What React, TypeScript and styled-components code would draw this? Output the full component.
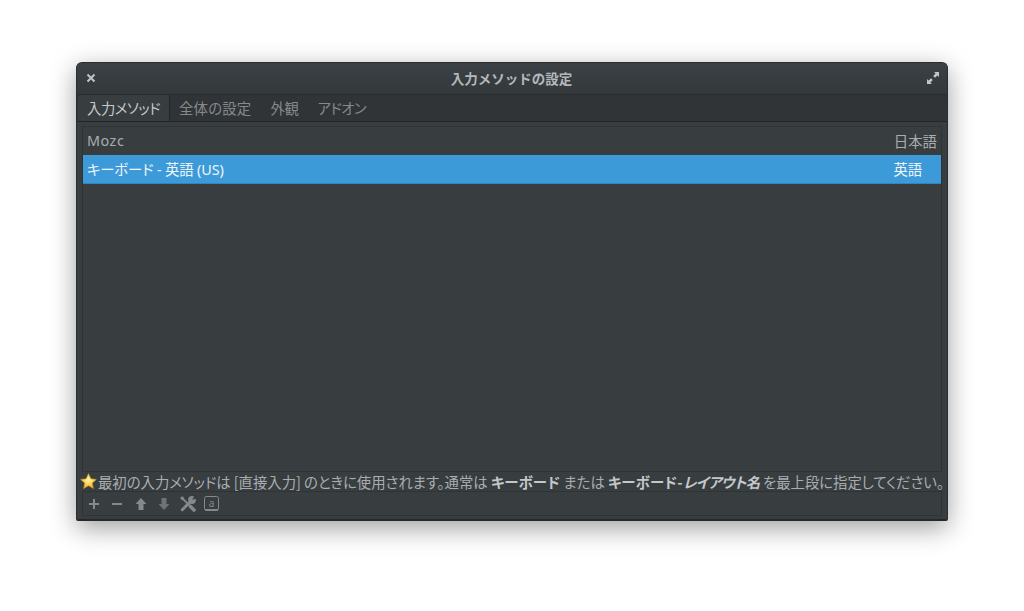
import React from "react";
import styled, { createGlobalStyle } from "styled-components";

const Global = createGlobalStyle`
  html, body { margin: 0; padding: 0; background: #fff; }
  body { font-family: "Noto Sans", "Noto Sans CJK JP", sans-serif; font-size: 14px; }
`;

const Page = styled.div`
  width: 1024px;
  height: 611px;
  padding: 62px 76px 90px;
  box-sizing: border-box;
  overflow: hidden;
`;

const Window = styled.div`
  height: 459px;
  display: flex;
  flex-direction: column;
  background: #383d40;
  border: 1px solid #2b2e31;
  border-bottom: 2px solid #26292b;
  border-radius: 6px 6px 2px 2px;
  box-sizing: border-box;
  box-shadow: 0 7px 26px rgba(0, 0, 0, 0.38);
  overflow: hidden;
`;

const TitleBar = styled.header`
  height: 32px;
  flex: none;
  display: flex;
  align-items: center;
  justify-content: space-between;
  padding: 0 7px 2px 8px;
  background: linear-gradient(#3c4145, #33383b);
  border-bottom: 1px solid #2a2d30;
  box-sizing: border-box;
`;

const Title = styled.h1`
  margin: 0;
  font-size: 13.5px;
  font-weight: 700;
  color: #b4b8ba;
  font-family: "Noto Sans CJK JP", sans-serif;
`;

const TabBar = styled.nav`
  height: 27px;
  flex: none;
  display: flex;
  align-items: stretch;
  padding-left: 1px;
  background: #303437;
  border-bottom: 1px solid #232629;
  box-sizing: border-box;
`;

const Tab = styled.div<{ $active?: boolean; $spacing: number }>`
  display: flex;
  align-items: center;
  padding: 0 9px 2px;
  margin-right: ${(p) => (p.$active ? "0" : "1px")};
  font-family: "Noto Sans CJK JP", sans-serif;
  font-size: 14.4px;
  font-feature-settings: "palt";
  letter-spacing: ${(p) => p.$spacing}px;
  color: ${(p) => (p.$active ? "#c4c8ca" : "#85898c")};
  background: ${(p) => (p.$active ? "#383d40" : "transparent")};
  border-right: ${(p) => (p.$active ? "1px solid #232629" : "none")};
  border-radius: ${(p) => (p.$active ? "3px 3px 0 0" : "0")};
`;

const Body = styled.main`
  flex: 1;
  min-height: 0;
  display: flex;
  flex-direction: column;
  padding: 4px 5px 3px;
`;

const List = styled.div`
  flex: 1;
  min-height: 0;
  border: 1px solid #2f3336;
`;

const Row = styled.div<{ $selected?: boolean }>`
  height: ${(p) => (p.$selected ? "29px" : "28px")};
  display: flex;
  align-items: center;
  justify-content: space-between;
  padding: 0 ${(p) => (p.$selected ? "19px" : "4px")} ${(p) => (p.$selected ? "2px" : "1px")} 4px;
  font-family: "Noto Sans", "Noto Sans CJK JP", sans-serif;
  font-size: 14.4px;
  font-feature-settings: "palt";
  letter-spacing: ${(p) => (p.$selected ? "-0.15px" : "0")};
  color: ${(p) => (p.$selected ? "#eef5fa" : "#a9adb0")};
  background: ${(p) => (p.$selected ? "#3d9ad9" : "transparent")};
  border-bottom: ${(p) => (p.$selected ? "1px solid #3484bb" : "none")};
  box-sizing: border-box;
`;

const LatinName = styled.span`
  letter-spacing: 0.5px;
`;

const Hint = styled.div`
  height: 19px;
  flex: none;
  display: flex;
  align-items: center;
  margin: 0 -2px;
  box-sizing: border-box;
  font-family: "Noto Sans CJK JP", sans-serif;
  font-size: 14.4px;
  font-feature-settings: "palt";
  letter-spacing: -0.04px;
  white-space: nowrap;
  color: #a9adb0;
  b { font-weight: 700; color: #c4c8ca; letter-spacing: 0.3px; }
  i { font-style: italic; font-weight: 700; color: #c4c8ca; letter-spacing: -0.5px; }
`;

const Star = styled.svg`
  width: 17px;
  height: 17px;
  flex: none;
  margin-right: 1px;
`;

const Toolbar = styled.div`
  height: 25px;
  flex: none;
  display: flex;
  align-items: center;
  gap: 5.4px;
  padding-left: 2px;
  border: 1px solid #2f3336;
  box-sizing: border-box;
`;

const ToolIcon = styled.svg`
  width: 18px;
  height: 18px;
  flex: none;
`;

export default function App() {
  return (
    <Page>
      <Global />
      <Window>
        <TitleBar>
          <svg width="12" height="12" viewBox="0 0 12 12">
            <path d="M2.500 2.500l7 7M9.500 2.500l-7 7" stroke="#c2c5c7" strokeWidth="2" />
          </svg>
          <Title>入力メソッドの設定</Title>
          <svg width="14" height="14" viewBox="0 0 14 14" fill="#c2c5c7">
            <path d="M8 1h5v5l-1.600-1.600L9 6.800 7.200 5l2.400-2.400zM1 8l1.600 1.600L5 7.200 6.800 9l-2.400 2.400L6 13H1z" />
          </svg>
        </TitleBar>
        <TabBar>
          <Tab $active $spacing={-0.5}>入力メソッド</Tab>
          <Tab $spacing={0.2}>全体の設定</Tab>
          <Tab $spacing={-0.3}>外観</Tab>
          <Tab $spacing={-0.6}>アドオン</Tab>
        </TabBar>
        <Body>
          <List>
            <Row><LatinName>Mozc</LatinName><span>日本語</span></Row>
            <Row $selected><span>キーボード - 英語 (US)</span><span>英語</span></Row>
          </List>
          <Hint>
            <Star viewBox="0 0 17 17">
              <defs>
                <radialGradient id="star" cx="0.5" cy="0.4" r="0.6">
                  <stop offset="0" stopColor="#fff3a8" />
                  <stop offset="0.6" stopColor="#f8cf4e" />
                  <stop offset="1" stopColor="#e8a52a" />
                </radialGradient>
              </defs>
              <path d="M8.500.6l2.400 5.200 5.500.6-4.100 3.700 1.200 5.500-5-2.800-5 2.800 1.200-5.500L.6 6.400l5.500-.6z" fill="url(#star)" stroke="#c9902a" strokeWidth=".6" strokeLinejoin="round" />
            </Star>
            最初の入力メソッドは [直接入力] のときに使用されます。通常は&nbsp;<b>キーボード</b>&nbsp;または&nbsp;<b>キーボード-<i>レイアウト名</i></b>&nbsp;を最上段に指定してください。
          </Hint>
          <Toolbar>
            <ToolIcon viewBox="0 0 18 18"><path d="M4 9h10M9 4v10" stroke="#85898c" strokeWidth="2" /></ToolIcon>
            <ToolIcon viewBox="0 0 18 18"><path d="M4 9h10" stroke="#85898c" strokeWidth="2" /></ToolIcon>
            <ToolIcon viewBox="0 0 18 18"><path d="M9 3l5.500 6H11.500v6h-5V9H3.500z" fill="#85898c" /></ToolIcon>
            <ToolIcon viewBox="0 0 18 18"><path d="M9 15l5.500-6H11.500V3h-5v6H3.500z" fill="#6f7376" /></ToolIcon>
            <ToolIcon viewBox="0 0 18 18">
              <path d="M2.500 2.500l8.500 8.500" stroke="#85898c" strokeWidth="1.800" />
              <path d="M11.500 11.500l3.500 3.500" stroke="#85898c" strokeWidth="3.600" strokeLinecap="round" />
              <path d="M1.200 3l1.800-1.800 2.300 1.600-2.500 2.500z" fill="#85898c" />
              <path d="M3.300 14.700l8.700-8.700" stroke="#85898c" strokeWidth="3" strokeLinecap="round" />
              <circle cx="13" cy="5" r="3.900" fill="#85898c" />
              <path d="M13.200 4.800l2.500-4.500 3 3z" fill="#383d40" />
            </ToolIcon>
            <ToolIcon viewBox="0 0 18 18">
              <rect x="2.500" y="1.500" width="14" height="14" rx="2" fill="none" stroke="#85898c" />
              <path d="M3 14.800h13" stroke="#85898c" strokeWidth="1.600" />
              <text x="9.500" y="11.500" fontSize="10" textAnchor="middle" fill="#85898c" fontFamily="Noto Sans">a</text>
            </ToolIcon>
          </Toolbar>
        </Body>
      </Window>
    </Page>
  );
}
